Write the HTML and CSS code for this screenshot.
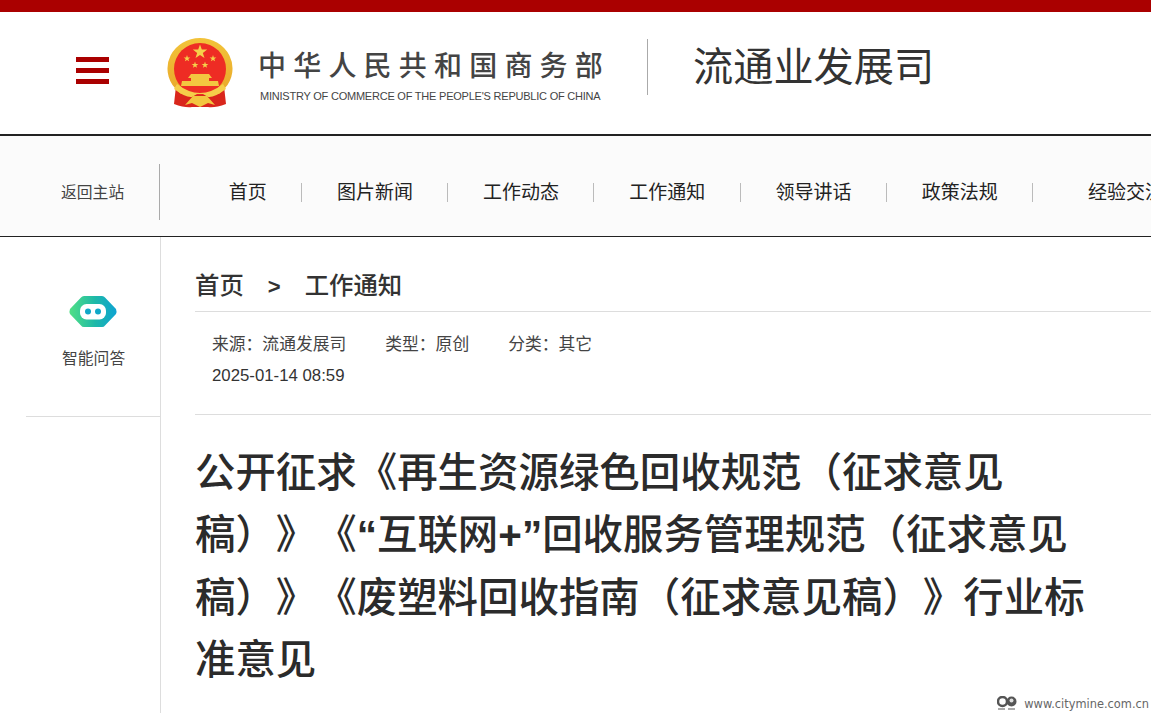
FILE: index.html
```html
<!DOCTYPE html>
<html lang="zh-CN">
<head>
<meta charset="utf-8">
<title>流通业发展司</title>
<link rel="stylesheet" href="styles.css">
</head>
<body>
<div class="topbar"></div>
<header class="header">
  <div class="burger"><span></span><span></span><span></span></div>
  <svg class="emblem" viewBox="0 0 66 70" aria-hidden="true">
    <defs>
      <linearGradient id="gold" x1="0" y1="0" x2="0" y2="1"><stop offset="0" stop-color="#f2c33a"/><stop offset="1" stop-color="#e9a92a"/></linearGradient>
      <polygon id="star" points="0,-5 1.2,-1.6 4.800,-1.6 1.9,.6 3,4 0,2 -3,4 -1.9,.6 -4.800,-1.6 -1.2,-1.6"/>
    </defs>
    <path d="M9 48 L7 66 Q18 70 25 69 H41 Q48 70 59 66 L57 48 Z" fill="#d9261c"/>
    <path d="M33 0 A32.500 30.500 0 0 1 58 50 L52 56 H14 L8 50 A32.500 30.500 0 0 1 33 0 Z" fill="url(#gold)"/>
    <circle cx="33" cy="31" r="26" fill="#ee2c24"/>
    <use href="#star" transform="translate(33 14) scale(1.500)" fill="#f5d04a"/>
    <use href="#star" transform="translate(20 20.500) scale(.7)" fill="#f5d04a"/>
    <use href="#star" transform="translate(46 20.500) scale(.7)" fill="#f5d04a"/>
    <use href="#star" transform="translate(28 27) scale(.7)" fill="#f5d04a"/>
    <use href="#star" transform="translate(38 27) scale(.7)" fill="#f5d04a"/>
    <path d="M21 40 L24 36 H42 L45 40 H42 V43 H51 L52 48 H14 L15 43 H24 V40 Z" fill="#f3c640"/>
    <path d="M10 46 Q33 64 56 46 L59 51 Q47 60 41 59 L36 56 H30 L25 59 Q19 60 7 51 Z" fill="#f5cf4a"/>
    <path d="M18 67 L26 58 H40 L48 67 L41 65 L33 69 L25 65 Z" fill="#f3c640"/>
  </svg>
  <div class="ministry">
    <div class="ministry-cn">中华人民共和国商务部</div>
    <div class="ministry-en">MINISTRY OF COMMERCE OF THE PEOPLE'S REPUBLIC OF CHINA</div>
  </div>
  <div class="divider"></div>
  <div class="dept">流通业发展司</div>
</header>
<nav class="nav">
  <div class="nav-back"><a>返回主站</a></div>
  <ul class="nav-list">
    <li>首页</li>
    <li>图片新闻</li>
    <li>工作动态</li>
    <li>工作通知</li>
    <li>领导讲话</li>
    <li>政策法规</li>
    <li>经验交流</li>
  </ul>
</nav>
<div class="page">
  <aside class="side">
    <div class="side-box">
      <svg class="robot" viewBox="0 0 48 31" aria-hidden="true">
        <defs><linearGradient id="rb" x1="0" y1="0" x2="1" y2="0"><stop offset="0" stop-color="#50df85"/><stop offset=".55" stop-color="#1db8a8"/><stop offset="1" stop-color="#0ea3d2"/></linearGradient></defs>
        <path d="M12 1.500 Q13 0 15 0 H33 Q35 0 36 1.500 L47 13 Q48 15.500 47 18 L36 29.500 Q35 31 33 31 H15 Q13 31 12 29.500 L1 18 Q0 15.500 1 13 Z" fill="url(#rb)"/>
        <rect x="11" y="8" width="26" height="15.500" rx="6.500" fill="#fff"/>
        <circle cx="19" cy="15.500" r="3" fill="#10a8c8"/>
        <circle cx="29" cy="15.500" r="3" fill="#10a8c8"/>
      </svg>
      <div class="side-label">智能问答</div>
    </div>
  </aside>
  <main class="main">
    <div class="crumb"><span>首页</span><b class="crumb-sep">&gt;</b><span>工作通知</span></div>
    <div class="meta">
      <div class="meta-row"><span>来源：流通发展司</span><span>类型：原创</span><span>分类：其它</span></div>
      <div class="meta-date">2025-01-14 08:59</div>
    </div>
    <h1 class="title">公开征求《再生资源绿色回收规范（征求意见稿）》《<b class="title-latin">“</b>互联网<b class="title-latin">+”</b>回收服务管理规范（征求意见稿）》《废塑料回收指南（征求意见稿）》行业标准意见</h1>
  </main>
</div>
<div class="mark">
  <svg class="mark-icon" viewBox="0 0 20 15" aria-hidden="true">
    <circle cx="5.500" cy="5.500" r="4.500" fill="none" stroke="#555" stroke-width="2.500"/>
    <circle cx="14.500" cy="5.500" r="5" fill="#555"/>
    <circle cx="14.500" cy="4.500" r="2" fill="#ddd"/>
    <rect x="1" y="12" width="7" height="2" fill="#aaa"/>
    <rect x="11" y="12" width="7" height="2" fill="#aaa"/>
  </svg>
  <span>www.citymine.com.cn</span>
</div>
</body>
</html>
```
FILE: styles.css
```css
* { box-sizing: border-box; }
html, body { margin: 0; padding: 0; height: 100%; overflow: hidden; }
body {
  position: relative;
  background: #fff;
  color: #333;
  font-family: "Liberation Sans", "Noto Sans CJK SC", sans-serif;
  text-spacing-trim: space-all;
}
.topbar { height: 12px; background: #aa0000; }
.header {
  height: 124px;
  display: flex;
  align-items: center;
  padding-left: 76px;
  border-bottom: 2px solid #222;
  background: #fff;
}
.burger { width: 33px; height: 27px; display: flex; flex-direction: column; justify-content: space-between; margin: -5px 58px 0 0; }
.burger span { display: block; height: 5px; background: #aa0000; }
.emblem { width: 66px; height: 70px; margin: 0 26px 0 0; flex: none; }
.ministry { width: 345px; margin-top: 6px; margin-left: -1px; }
.ministry-cn { font-size: 28px; line-height: 36px; letter-spacing: 7.200px; font-weight: 500; color: #444; white-space: nowrap; }
.ministry-en { font-size: 11px; line-height: 14px; margin-top: 4px; color: #444; white-space: nowrap; letter-spacing: -0.220px; padding-left: 2px; }
.divider { width: 1px; height: 56px; background: #aaa; margin: -12px 46px 0 44px; flex: none; }
.dept { font-size: 40.200px; line-height: 50px; color: #333; margin: -10px 0 0 -1px; white-space: nowrap; }
.nav {
  height: 101px;
  display: flex;
  align-items: center;
  padding-top: 11px;
  background: #fbfbfb;
  border-bottom: 1px solid #222;
}
.nav-back { width: 160px; height: 56px; flex: none; display: flex; align-items: center; padding-left: 61px; border-right: 1px solid #aaa; font-size: 15.800px; color: #444; white-space: nowrap; }
.nav-list { list-style: none; margin: 0; padding: 1px 0 0 33.700px; display: flex; white-space: nowrap; }
.nav-list li { font-size: 19px; line-height: 19px; padding: 0 34.200px 0 35px; border-right: 1px solid #bbb; color: #222; }
.nav-list li:last-child { border-right: 0; padding-left: 55px; }
.page { display: flex; height: 477px; }
.side { width: 161px; flex: none; border-right: 1px solid #ddd; padding-left: 26px; }
.side-box { height: 180px; border-bottom: 1px solid #ddd; padding: 59px 0 0 36px; }
.robot { display: block; width: 48px; height: 31px; margin-left: 7px; }
.side-label { font-size: 15.800px; line-height: 22px; margin-top: 21px; color: #444; white-space: nowrap; }
.main { flex: 1; padding-left: 34px; min-width: 0; }
.crumb { height: 75px; padding-top: 33px; font-size: 24.400px; font-weight: 500; line-height: 32px; border-bottom: 1px solid #ddd; color: #333; }
.crumb-sep { margin: 0 24px; font-size: 22px; }
.meta { height: 103px; padding: 17px 0 0 17px; border-bottom: 1px solid #ddd; font-size: 16.800px; line-height: 31px; color: #444; }
.meta-row { display: flex; gap: 39px; }
.meta-date { color: #333; }
.title { margin: 27px 0 0; width: 900px; font-size: 40.450px; line-height: 62.400px; font-weight: 500; color: #2b2b2b; }
.title-latin { font-weight: 700; }
.mark {
  position: absolute;
  right: 2px;
  bottom: 2px;
  display: flex;
  align-items: center;
  gap: 7px;
  font-family: "DejaVu Sans", sans-serif;
  font-size: 11.400px;
  color: #666;
}
.mark-icon { width: 20px; height: 15px; }
```
